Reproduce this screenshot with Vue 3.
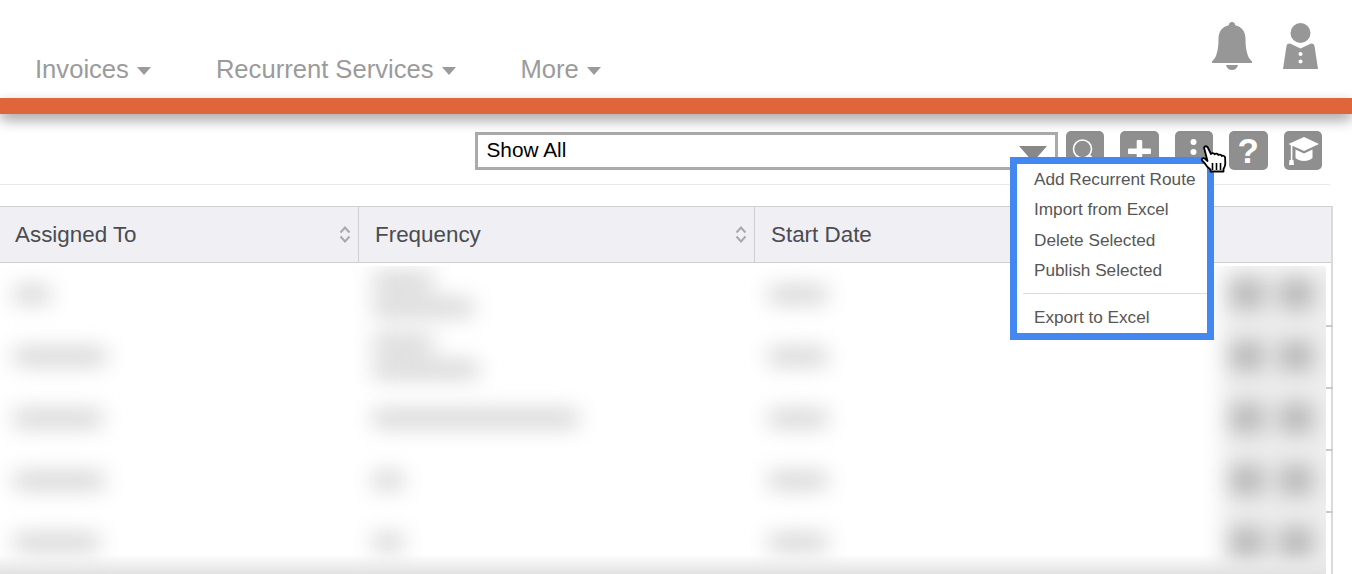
<template>
  <div class="page">
    <header class="nav">
      <div class="nav-links">
        <a v-for="link in links" :key="link" class="nav-link">
          {{ link }}<span class="caret"></span>
        </a>
      </div>
      <div class="nav-icons">
        <svg class="bell" viewBox="0 0 40 48" width="40" height="48">
          <path fill="#979797" d="M20 0c-2 0-3.200 1.300-3.200 3.200C9.800 4.700 6.500 10 6.500 17c0 6-.5 10.500-1.800 14.500C4.300 34.500 2 37.500 0 39.500V41h40v-1.500c-2-2-4.300-5-4.700-8C34 27.500 33.500 23 33.500 17c0-7-3.300-12.300-10.300-13.800C23.200 1.300 22 0 20 0z" />
          <path fill="#979797" d="M14 43h12c-.6 3-3 5-6 5s-5.400-2-6-5z" />
        </svg>
        <svg class="person" viewBox="0 0 35 46" width="35" height="46">
          <circle cx="17.500" cy="10" r="10" fill="#979797" />
          <path fill="#979797" d="M7 20.500l10.500 5 10.500-5c2 0 3.200.8 3.500 2.500L35 46H0l3.500-23c.3-1.700 1.500-2.500 3.500-2.500z" />
          <circle cx="17.500" cy="31" r="2" fill="#fff" />
          <circle cx="17.500" cy="38.500" r="2" fill="#fff" />
        </svg>
      </div>
    </header>
    <div class="stripe"></div>

    <section class="toolbar">
      <div class="select">
        <span>Show All</span>
        <span class="select-arrow"></span>
      </div>
      <div class="tools">
        <button class="tool">
          <svg viewBox="0 0 38 38" width="38" height="38" fill="none" stroke="#fff">
            <circle cx="16.500" cy="17" r="9" stroke-width="1.600" />
            <path d="M23 23.500l8 8" stroke-width="2.500" />
          </svg>
        </button>
        <button class="tool">
          <svg viewBox="0 0 38 38" width="38" height="38" fill="#fff">
            <rect x="8" y="16.500" width="23" height="5.500" rx="1" />
            <rect x="16.700" y="8" width="5.500" height="23" rx="1" />
          </svg>
        </button>
        <button class="tool">
          <svg viewBox="0 0 38 38" width="38" height="38" fill="#fff">
            <circle cx="18.500" cy="10" r="3" />
            <circle cx="18.500" cy="20" r="3" />
            <circle cx="18.500" cy="30" r="3" />
          </svg>
        </button>
        <button class="tool tool-help">?</button>
        <button class="tool">
          <svg viewBox="0 0 38 38" width="38" height="38" fill="#fff">
            <path d="M20 5L35 12 20 19 4.500 12z" />
            <path d="M11.500 17.500L20 21.500l8.500-4v8.500c-2 2-5.500 3-8.500 3s-6.500-1-8.500-3z" />
            <rect x="6.800" y="12" width="1.600" height="16" />
            <path d="M5.500 28h4l.5 5H5z" />
          </svg>
        </button>
      </div>
    </section>

    <section class="table">
      <div class="thead">
        <div v-for="col in columns" :key="col.label" class="th">
          <span>{{ col.label }}</span>
          <svg v-if="col.sort" class="sort" viewBox="0 0 12 17" width="12" height="17" fill="none" stroke="#a9a9ad" stroke-width="2">
            <path d="M1.500 6.500l4.500-5 4.500 5" />
            <path d="M1.500 10.500l4.500 5 4.500-5" />
          </svg>
        </div>
      </div>
      <div class="tbody">
        <div class="clip">
          <div class="blur">
            <div v-for="(row, i) in rows" :key="i" class="row">
              <div class="cell"><i :style="{ width: row.who + 'px' }"></i></div>
              <div class="cell">
                <i v-for="(w, j) in row.freq" :key="j" :style="{ width: w + 'px' }"></i>
              </div>
              <div class="cell"><i :style="{ width: '58px' }"></i></div>
              <div class="actions"><b></b><b></b></div>
            </div>
          </div>
          <div class="fade"></div>
        </div>
        <div class="ticks">
          <span v-for="n in 4" :key="n" class="tick"></span>
        </div>
      </div>
    </section>

    <ul class="menu">
      <li v-for="item in menuTop" :key="item">{{ item }}</li>
      <li class="menu-sep"></li>
      <li class="menu-last">Export to Excel</li>
    </ul>

    <svg class="hand" viewBox="0 0 30 32" width="30" height="32">
      <path fill="#fff" stroke="#000" stroke-width="1.800" stroke-linejoin="round" d="M4 3.500c.7-1.700 3-1.700 3.800 0l3.200 6.500c.8-1.200 3-1.200 3.700.3.8-1 3-.9 3.600.7.900-.8 3-.5 3.500 1 .8-.8 3-.4 3.300 1.500l.2 6c0 2.500-1 4-1.800 5.500v2.500H10.500v-2c-2.500-1.500-4.500-4-6-6.500L2 16.500c-.8-1.600 1-3.200 2.800-2l2.700 2.500z" />
      <path fill="none" stroke="#000" stroke-width="1.600" d="M12.500 19v7M16.500 19v7M20.500 19v7" />
    </svg>
  </div>
</template>

<script setup>
const links = ["Invoices", "Recurrent Services", "More"];

const columns = [
  { label: "Assigned To", sort: true },
  { label: "Frequency", sort: true },
  { label: "Start Date", sort: false },
];

// contents are blurred in the original, so only the widths matter
const rows = [
  { who: 36, freq: [60, 100] },
  { who: 92, freq: [60, 105] },
  { who: 88, freq: [205] },
  { who: 90, freq: [30] },
  { who: 85, freq: [30] },
];

const menuTop = [
  "Add Recurrent Route",
  "Import from Excel",
  "Delete Selected",
  "Publish Selected",
];
</script>

<style>
html,
body {
  margin: 0;
  background: #fff;
}
</style>

<style scoped>
.page {
  position: relative;
  width: 1352px;
  height: 574px;
  overflow: hidden;
  background: #fff;
  font-family: "Liberation Sans", Arial, sans-serif;
}

.nav {
  display: flex;
  justify-content: space-between;
  height: 98px;
  padding: 0 34px 0 35px;
  box-sizing: border-box;
}

.nav-links {
  display: flex;
  gap: 65px;
  padding-top: 54px;
}

.nav-link {
  display: flex;
  align-items: center;
  height: 30px;
  font-size: 25.6px;
  color: #9b9b9b;
}

.caret {
  width: 0;
  height: 0;
  margin: 3px 0 0 8px;
  border-left: 7.5px solid transparent;
  border-right: 7.5px solid transparent;
  border-top: 8px solid #9b9b9b;
}

.nav-icons {
  display: flex;
  gap: 31px;
  align-items: flex-start;
  padding-top: 22px;
}

.person {
  margin-top: 1px;
}

.stripe {
  position: relative;
  height: 16px;
  background: #df653a;
  box-shadow: 0 6px 14px rgba(0, 0, 0, 0.36);
}

.toolbar {
  display: flex;
  justify-content: flex-end;
  align-items: flex-start;
  gap: 8px;
  width: 1330px;
  height: 71px;
  padding: 17px 8px 0 0;
  box-sizing: border-box;
  border-bottom: 1px solid #e9e9e9;
}

.select {
  display: flex;
  justify-content: space-between;
  align-items: center;
  width: 583px;
  height: 38px;
  margin-top: 1px;
  padding: 0 8px 2px 9px;
  box-sizing: border-box;
  border: 3px solid #aaa;
  font-size: 20.8px;
  color: #000;
}

.select-arrow {
  width: 0;
  height: 0;
  margin-top: 8px;
  border-left: 14px solid transparent;
  border-right: 14px solid transparent;
  border-top: 16px solid #888;
}

.tools {
  display: flex;
  gap: 16px;
}

.tool {
  display: flex;
  align-items: center;
  justify-content: center;
  width: 38.500px;
  height: 39px;
  padding: 0;
  border: none;
  border-radius: 5px;
  background: #8f8f8f;
  font-family: inherit;
}

.tool-help {
  font-size: 35px;
  font-weight: 700;
  color: #fff;
}

.table {
  width: 1333px;
  margin-top: 21px;
  box-sizing: border-box;
  border-right: 2px solid #dadada;
}

.thead {
  display: grid;
  grid-template-columns: 359px 396px 1fr;
  height: 57px;
  box-sizing: border-box;
  border-top: 1px solid #d0d0d4;
  border-bottom: 1px solid #cfcfd3;
  background: #efeff4;
}

.th {
  display: flex;
  justify-content: space-between;
  align-items: center;
  padding: 0 7px 0 15px;
  border-right: 1px solid #cfcfd3;
  font-size: 22.4px;
  color: #4b4b50;
}

.th:nth-child(2) {
  padding-left: 16px;
}

.th:last-child {
  border-right: none;
  padding-left: 16px;
}

.tbody {
  position: relative;
  height: 312px;
  padding-top: 3px;
}

.clip {
  position: relative;
  width: 1326px;
  height: 308px;
  overflow: hidden;
}

.blur {
  width: 1345px;
  margin-top: -3px;
  filter: blur(11px);
}

.row {
  display: grid;
  grid-template-columns: 359px 396px 1fr 124px;
  height: 62px;
}

.cell {
  display: flex;
  flex-direction: column;
  justify-content: center;
  gap: 11px;
  padding-left: 14px;
}

.cell i {
  display: block;
  height: 15px;
  background: #cbcbcb;
}

.actions {
  display: flex;
  align-items: center;
  gap: 15px;
  padding-left: 9px;
  background: #eee;
}

.actions b {
  width: 34px;
  height: 30px;
  background: #b6b6b6;
}

.fade {
  position: absolute;
  left: 0;
  right: 0;
  bottom: 0;
  height: 20px;
  background: linear-gradient(rgba(226, 226, 226, 0), rgba(226, 226, 226, 1));
}

.ticks {
  position: absolute;
  top: 62px;
  right: -2px;
  display: flex;
  flex-direction: column;
  gap: 60px;
}

.tick {
  display: block;
  width: 7px;
  height: 2px;
  background: #c9c9c9;
}

.menu {
  position: absolute;
  top: 157px;
  left: 1010px;
  width: 204px;
  height: 183px;
  margin: 0;
  padding: 0;
  box-sizing: border-box;
  list-style: none;
  border: 7.500px solid #4288f0;
  background: #fff;
  font-size: 17.200px;
  color: #565656;
}

.menu li {
  height: 30.400px;
  line-height: 30.400px;
  padding-left: 17px;
}

.menu .menu-sep {
  height: 1px;
  margin: 7px 0 0 6px;
  padding: 0;
  background: #dcdcdc;
}

.menu .menu-last {
  margin-top: 8px;
}

.hand {
  position: absolute;
  top: 144px;
  left: 1200px;
}
</style>
